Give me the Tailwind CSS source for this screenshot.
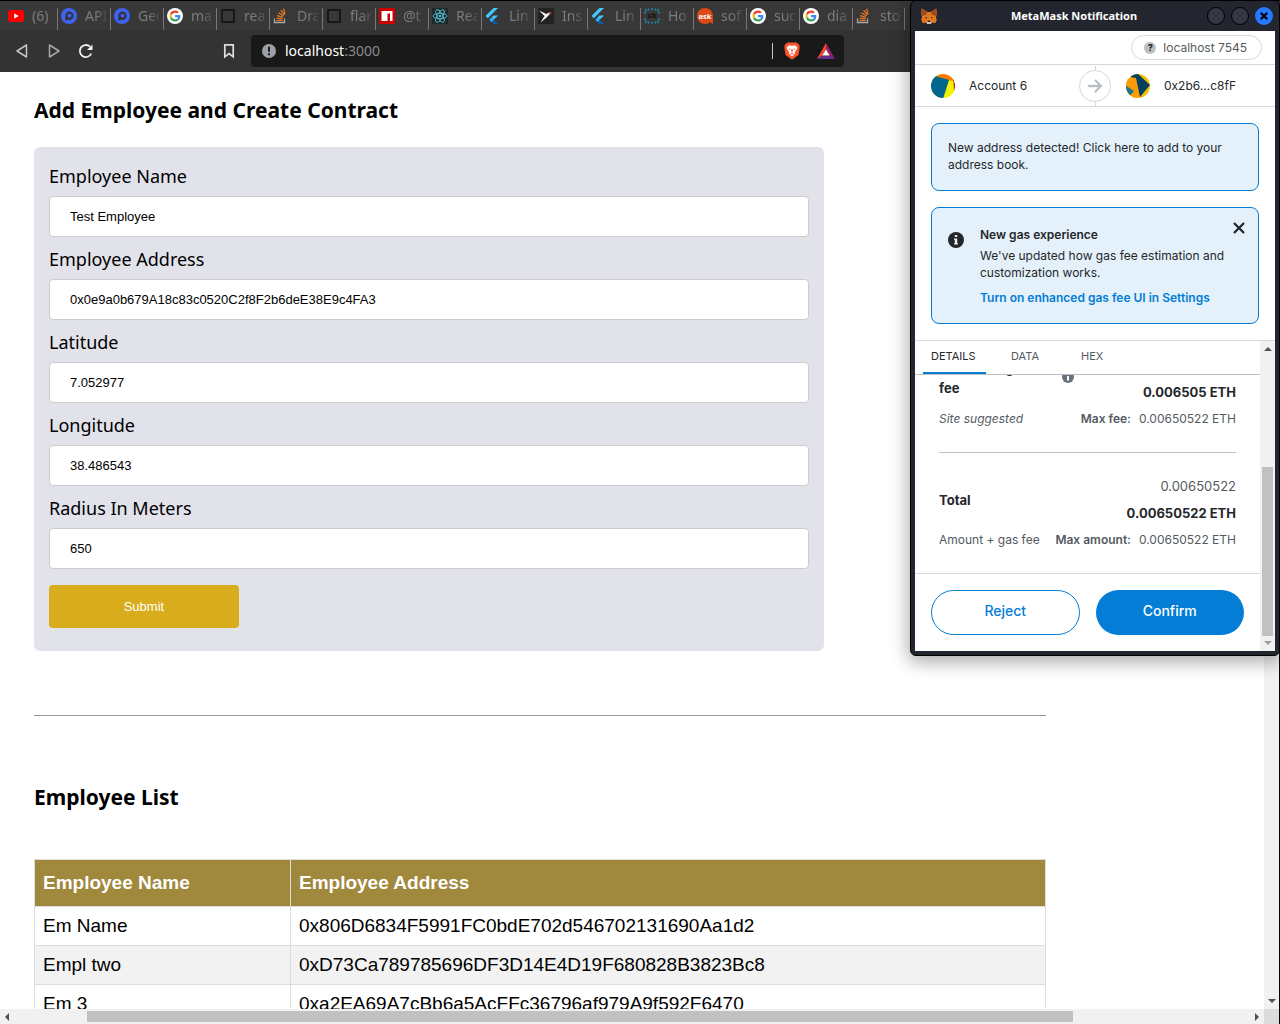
<!DOCTYPE html>
<html lang="en">
<head>
<meta charset="utf-8">
<meta name="viewport" content="width=device-width, initial-scale=1">
<title>Employee Contracts</title>
<script src="https://cdn.jsdelivr.net/npm/@tailwindcss/browser@4"></script>
</head>
<body class="relative flex h-screen flex-col overflow-hidden bg-white text-black">

<!-- Shared favicons -->
<svg class="hidden" aria-hidden="true">
  <symbol id="youtube" viewBox="0 0 16 16"><rect y="2" width="16" height="12" rx="2.500" fill="#f00"/><path d="M6.200 5.400v5.200L10.800 8z" fill="#fff"/></symbol>
  <symbol id="geo" viewBox="0 0 16 16"><circle cx="8" cy="8" r="8" fill="#3f62f2"/><path d="M4.200 12.800V8A4.200 4.200 0 1 1 8.400 12H6.500z" fill="#323540"/><circle cx="8.500" cy="7.600" r="1.900" fill="#3f62f2"/></symbol>
  <symbol id="google" viewBox="0 0 48 48"><circle cx="24" cy="24" r="24" fill="#fff"/><g transform="translate(7.500 7.500) scale(.69)"><path fill="#EA4335" d="M24 9.500c3.540 0 6.710 1.220 9.210 3.600l6.850-6.850C35.900 2.380 30.470 0 24 0 14.620 0 6.510 5.380 2.560 13.220l7.980 6.190C12.430 13.720 17.740 9.500 24 9.500z"/><path fill="#4285F4" d="M46.980 24.550c0-1.570-.15-3.090-.38-4.550H24v9.020h12.940c-.58 2.960-2.260 5.480-4.780 7.180l7.730 6c4.510-4.180 7.090-10.360 7.090-17.650z"/><path fill="#FBBC05" d="M10.530 28.590c-.48-1.450-.76-2.990-.76-4.590s.27-3.140.76-4.590l-7.980-6.190C.92 16.460 0 20.120 0 24c0 3.880.92 7.540 2.560 10.780l7.970-6.190z"/><path fill="#34A853" d="M24 48c6.480 0 11.930-2.130 15.890-5.810l-7.730-6c-2.150 1.450-4.920 2.300-8.160 2.300-6.260 0-11.570-4.220-13.470-9.910l-7.980 6.190C6.510 42.620 14.620 48 24 48z"/></g></symbol>
  <symbol id="square" viewBox="0 0 16 16"><rect x="2" y="2" width="12" height="12" fill="none" stroke="#090909" stroke-width="1.300"/></symbol>
  <symbol id="stack" viewBox="0 0 16 16"><path d="M1.500 10.500v4h10v-4" fill="none" stroke="#a5a8aa" stroke-width="1.300"/><path d="M3.500 12.500h6M3.600 10.300l6 .6M4.100 7.700l5.800 1.700M5.500 4.800l5.100 3.200M7.700 2.200l3.700 4.700M10.700.6l1.200 5.800" stroke="#f47920" stroke-width="1.200"/></symbol>
  <symbol id="npm" viewBox="0 0 16 16"><path fill="#c00" d="M0 0h16v16H0z"/><path fill="#fff" d="M2.500 3h11v10H11V5.500H8.500V13h-6z"/></symbol>
  <symbol id="react" viewBox="0 0 16 16"><rect width="16" height="16" rx="1" fill="#20282b"/><g fill="none" stroke="#54bdd4" stroke-width=".9"><ellipse cx="8" cy="8" rx="7" ry="2.700"/><ellipse cx="8" cy="8" rx="7" ry="2.700" transform="rotate(60 8 8)"/><ellipse cx="8" cy="8" rx="7" ry="2.700" transform="rotate(120 8 8)"/></g><circle cx="8" cy="8" r="1.300" fill="#54bdd4"/></symbol>
  <symbol id="flutter" viewBox="0 0 16 16"><path fill="#45c8fb" d="M8.500 0H13L2.800 10.200.5 8z"/><path fill="#45c8fb" d="M8.500 7.400H13L8.800 11.600 6.500 9.400z"/><path fill="#0d5ba6" d="M4.300 11.700 6.600 9.400 13 16H8.500z"/><path fill="#2cb4f0" d="m4.300 11.700 2.300-2.300 2.300 2.300-2.300 2.300z"/></symbol>
  <symbol id="bird" viewBox="0 0 16 16"><rect width="16" height="16" rx="1" fill="#222"/><path fill="#f5f5f5" d="M1 2.500 8.500 6l2.300-1.500 1.700.7-2 2.300L8 10l-5.500 4.500L6.500 8z"/><path fill="#e04a32" d="M9.500 5c1.500-1.300 3.200-.8 4.800.2l-2.800.5z"/></symbol>
  <symbol id="cb" viewBox="0 0 16 16"><path d="M1 1l2 2M4.200.5l.8 2M8 0v2.200M11.800.5l-.8 2M15 1l-2 2M0 4.500h2M14 4.500h2M0 11.500h2M14 11.500h2M1 15l2-2M4.200 15.500l.8-2M8 16v-2.200M11.800 15.500l-.8-2M15 15l-2-2" stroke="#2188b5" stroke-width="1.300"/><text x="8" y="10.300" text-anchor="middle" font-family="Liberation Sans" font-weight="700" font-size="8" fill="#111">cb</text></symbol>
  <symbol id="ask" viewBox="0 0 16 16"><circle cx="8" cy="8" r="8" fill="#dd4814"/><path fill="#dd4814" d="M11 13l5-3v6z"/><text x="8" y="10.500" text-anchor="middle" font-family="Open Sans" font-weight="700" font-size="7.500" fill="#fff">ask</text></symbol>
  <symbol id="arrow" viewBox="0 0 8 4"><path d="M4 0 8 4H0z"/></symbol>
</svg>

<!-- Browser tabs -->
<nav class="flex h-[30px] shrink-0 overflow-hidden border-t border-black bg-[#383838] pl-1 font-['Noto_Sans',sans-serif] text-sm text-[#7c7c7c]" aria-label="Tabs">
  <a href="#" class="flex w-[53px] shrink-0 items-center gap-2 pl-1"><svg class="size-4 shrink-0"><use href="#youtube"/></svg><span class="w-[21px] overflow-hidden">(6)</span></a>
  <a href="#" class="flex w-[53px] shrink-0 items-center gap-2 pl-1 relative before:absolute before:left-0 before:top-[7px] before:h-[22px] before:w-px before:bg-[#777]"><svg class="size-4 shrink-0"><use href="#geo"/></svg><span class="w-[21px] overflow-hidden [mask-image:linear-gradient(90deg,#000_50%,#0004)]">API</span></a>
  <a href="#" class="flex w-[53px] shrink-0 items-center gap-2 pl-1 relative before:absolute before:left-0 before:top-[7px] before:h-[22px] before:w-px before:bg-[#777]"><svg class="size-4 shrink-0"><use href="#geo"/></svg><span class="w-[21px] overflow-hidden [mask-image:linear-gradient(90deg,#000_50%,#0004)]">Geo</span></a>
  <a href="#" class="flex w-[53px] shrink-0 items-center gap-2 pl-1 relative before:absolute before:left-0 before:top-[7px] before:h-[22px] before:w-px before:bg-[#777]"><svg class="size-4 shrink-0"><use href="#google"/></svg><span class="w-[21px] overflow-hidden [mask-image:linear-gradient(90deg,#000_50%,#0004)]">ma</span></a>
  <a href="#" class="flex w-[53px] shrink-0 items-center gap-2 pl-1 relative before:absolute before:left-0 before:top-[7px] before:h-[22px] before:w-px before:bg-[#777]"><svg class="size-4 shrink-0"><use href="#square"/></svg><span class="w-[21px] overflow-hidden [mask-image:linear-gradient(90deg,#000_50%,#0004)]">rea</span></a>
  <a href="#" class="flex w-[53px] shrink-0 items-center gap-2 pl-1 relative before:absolute before:left-0 before:top-[7px] before:h-[22px] before:w-px before:bg-[#777]"><svg class="size-4 shrink-0"><use href="#stack"/></svg><span class="w-[21px] overflow-hidden [mask-image:linear-gradient(90deg,#000_50%,#0004)]">Dra</span></a>
  <a href="#" class="flex w-[53px] shrink-0 items-center gap-2 pl-1 relative before:absolute before:left-0 before:top-[7px] before:h-[22px] before:w-px before:bg-[#777]"><svg class="size-4 shrink-0"><use href="#square"/></svg><span class="w-[21px] overflow-hidden [mask-image:linear-gradient(90deg,#000_50%,#0004)]">flar</span></a>
  <a href="#" class="flex w-[53px] shrink-0 items-center gap-2 pl-1 relative before:absolute before:left-0 before:top-[7px] before:h-[22px] before:w-px before:bg-[#777]"><svg class="size-4 shrink-0"><use href="#npm"/></svg><span class="w-[21px] overflow-hidden [mask-image:linear-gradient(90deg,#000_50%,#0004)]">@t</span></a>
  <a href="#" class="flex w-[53px] shrink-0 items-center gap-2 pl-1 relative before:absolute before:left-0 before:top-[7px] before:h-[22px] before:w-px before:bg-[#777]"><svg class="size-4 shrink-0"><use href="#react"/></svg><span class="w-[21px] overflow-hidden [mask-image:linear-gradient(90deg,#000_50%,#0004)]">Rea</span></a>
  <a href="#" class="flex w-[53px] shrink-0 items-center gap-2 pl-1 relative before:absolute before:left-0 before:top-[7px] before:h-[22px] before:w-px before:bg-[#777]"><svg class="size-4 shrink-0"><use href="#flutter"/></svg><span class="w-[21px] overflow-hidden [mask-image:linear-gradient(90deg,#000_50%,#0004)]">Lin</span></a>
  <a href="#" class="flex w-[53px] shrink-0 items-center gap-2 pl-1 relative before:absolute before:left-0 before:top-[7px] before:h-[22px] before:w-px before:bg-[#777]"><svg class="size-4 shrink-0"><use href="#bird"/></svg><span class="w-[21px] overflow-hidden [mask-image:linear-gradient(90deg,#000_50%,#0004)]">Ins</span></a>
  <a href="#" class="flex w-[53px] shrink-0 items-center gap-2 pl-1 relative before:absolute before:left-0 before:top-[7px] before:h-[22px] before:w-px before:bg-[#777]"><svg class="size-4 shrink-0"><use href="#flutter"/></svg><span class="w-[21px] overflow-hidden [mask-image:linear-gradient(90deg,#000_50%,#0004)]">Lin</span></a>
  <a href="#" class="flex w-[53px] shrink-0 items-center gap-2 pl-1 relative before:absolute before:left-0 before:top-[7px] before:h-[22px] before:w-px before:bg-[#777]"><svg class="size-4 shrink-0"><use href="#cb"/></svg><span class="w-[21px] overflow-hidden [mask-image:linear-gradient(90deg,#000_50%,#0004)]">Ho</span></a>
  <a href="#" class="flex w-[53px] shrink-0 items-center gap-2 pl-1 relative before:absolute before:left-0 before:top-[7px] before:h-[22px] before:w-px before:bg-[#777]"><svg class="size-4 shrink-0"><use href="#ask"/></svg><span class="w-[21px] overflow-hidden [mask-image:linear-gradient(90deg,#000_50%,#0004)]">sof</span></a>
  <a href="#" class="flex w-[53px] shrink-0 items-center gap-2 pl-1 relative before:absolute before:left-0 before:top-[7px] before:h-[22px] before:w-px before:bg-[#777]"><svg class="size-4 shrink-0"><use href="#google"/></svg><span class="w-[21px] overflow-hidden [mask-image:linear-gradient(90deg,#000_50%,#0004)]">sud</span></a>
  <a href="#" class="flex w-[53px] shrink-0 items-center gap-2 pl-1 relative before:absolute before:left-0 before:top-[7px] before:h-[22px] before:w-px before:bg-[#777]"><svg class="size-4 shrink-0"><use href="#google"/></svg><span class="w-[21px] overflow-hidden [mask-image:linear-gradient(90deg,#000_50%,#0004)]">dia</span></a>
  <a href="#" class="flex w-[53px] shrink-0 items-center gap-2 pl-1 relative before:absolute before:left-0 before:top-[7px] before:h-[22px] before:w-px before:bg-[#777] after:absolute after:right-0 after:top-[7px] after:h-[22px] after:w-px after:bg-[#777]"><svg class="size-4 shrink-0"><use href="#stack"/></svg><span class="w-[21px] overflow-hidden [mask-image:linear-gradient(90deg,#000_50%,#0004)]">sto</span></a>
</nav>

<!-- Toolbar -->
<header class="flex h-[42px] shrink-0 items-center bg-[#333] pl-[14px] font-['Noto_Sans',sans-serif] text-sm">
  <div class="flex items-center gap-4">
    <button aria-label="Back"><svg class="size-4" viewBox="0 0 16 16" fill="none" stroke="#c4c4c4" stroke-width="1.500" stroke-linejoin="round"><path d="M12.500 2v12L3 8z"/></svg></button>
    <button aria-label="Forward"><svg class="size-4" viewBox="0 0 16 16" fill="none" stroke="#a8a8a8" stroke-width="1.500" stroke-linejoin="round"><path d="M3.500 2v12L13 8z"/></svg></button>
    <button aria-label="Reload"><svg class="size-4" viewBox="0 0 16 16" fill="none" stroke="#f2f2f2" stroke-width="1.800"><path d="M13.300 10.500A6 6 0 1 1 12 3.700"/><path d="M14.500 1.500v5.500H9z" fill="#f2f2f2" stroke="none"/></svg></button>
  </div>
  <button class="ml-[127px]" aria-label="Bookmark"><svg class="size-4" viewBox="0 0 16 16" fill="none" stroke="#dedede" stroke-width="1.700"><path d="M3.800 1.800h8.400v12L8 10.500l-4.200 3.300z"/></svg></button>
  <form class="ml-[14px] flex h-8 w-[593px] items-center rounded bg-[#191919] pl-[11px] pr-[9px]">
    <svg class="size-[14px] shrink-0" viewBox="0 0 14 14"><circle cx="7" cy="7" r="7" fill="#9aa0a6"/><path d="M6 2.800h2v5H6zM6 9.200h2v2H6z" fill="#191919"/></svg>
    <div class="ml-[9px] flex-1 text-[#8a8a8a]" role="textbox" aria-label="Address"><span class="text-white">localhost</span>:3000</div>
    <span class="h-4 w-px bg-[#c8c8c8]"></span>
    <button type="button" class="ml-[11px]" aria-label="Shields"><svg class="h-[18px] w-4" viewBox="0 0 16 18"><path d="M3.500.5h9L15.500 3v3.500l-1 6.500L8 17.800 1.500 13l-1-6.500V3z" fill="#fb542b"/><path d="M5 3.200 8 3.800l3-.6 2.200 2.300-.6 2.300-1.800 2.200.3 1.500L8 14.500l-3.100-3 .3-1.500-1.800-2.200-.6-2.300z" fill="#fff"/><path d="m4.500 6.200 2 .8-.5 1.200zM11.500 6.200l-2 .8.500 1.200zM7.500 7h1l.4 2.500L8 10l-.9-.5zM6.200 11.500 8 10.700l1.800.8L8 12.800z" fill="#fb542b"/></svg></button>
    <button type="button" class="ml-[17px]" aria-label="Rewards"><svg class="h-4 w-[18px]" viewBox="0 0 18 16"><path d="M9 0 0 16l5.500-3.500L9 6z" fill="#ff4724"/><path d="M9 0v6l3.500 6.500L18 16z" fill="#9e1f63"/><path d="M0 16h18l-5.500-3.500h-7z" fill="#662d91"/><path d="m9 6.200 3.600 6.300H5.400z" fill="#fff"/></svg></button>
  </form>
</header>

<!-- Page viewport -->
<div class="flex min-h-0 flex-1 border-r border-black">
  <main class="min-w-0 flex-1 overflow-hidden pl-[34px] pt-6 font-['Noto_Sans',sans-serif]">
    <div class="w-[82.3%]">
      <h2 class="text-[21px]/7 font-bold">Add Employee and Create Contract</h2>
      <form class="mt-[23px] w-[78%] rounded-md bg-[#e2e2eb] p-[15px] text-lg/6">
        <label for="name" class="block pt-[2px]">Employee Name</label>
        <input id="name" value="Test Employee" class="my-2 block h-[41px] w-full rounded border border-[#ccc] bg-white px-5 font-['Liberation_Sans',sans-serif] text-[13px]">
        <label for="address" class="block pt-[2px]">Employee Address</label>
        <input id="address" value="0x0e9a0b679A18c83c0520C2f8F2b6deE38E9c4FA3" class="my-2 block h-[41px] w-full rounded border border-[#ccc] bg-white px-5 font-['Liberation_Sans',sans-serif] text-[13px]">
        <label for="lat" class="block pt-[2px]">Latitude</label>
        <input id="lat" value="7.052977" class="my-2 block h-[41px] w-full rounded border border-[#ccc] bg-white px-5 font-['Liberation_Sans',sans-serif] text-[13px]">
        <label for="lng" class="block pt-[2px]">Longitude</label>
        <input id="lng" value="38.486543" class="my-2 block h-[41px] w-full rounded border border-[#ccc] bg-white px-5 font-['Liberation_Sans',sans-serif] text-[13px]">
        <label for="radius" class="block pt-[2px]">Radius In Meters</label>
        <input id="radius" value="650" class="my-2 block h-[41px] w-full rounded border border-[#ccc] bg-white px-5 font-['Liberation_Sans',sans-serif] text-[13px]">
        <button type="button" class="my-2 mt-4 block h-[43px] w-1/4 rounded bg-[#d8ac1a] font-['Liberation_Sans',sans-serif] text-[13px] text-white">Submit</button>
      </form>
      <hr class="mt-16 border-t border-[#999]">
      <h2 class="mt-[67px] text-[21px]/7 font-bold">Employee List</h2>
      <table class="mt-12 w-full table-fixed border-collapse text-left font-['Liberation_Sans',sans-serif] text-[19px]/[22px]">
        <thead>
          <tr class="bg-[#a0883c] text-white">
            <th class="w-[256px] border border-[#ddd] px-2 py-3 font-bold">Employee Name</th>
            <th class="border border-[#ddd] px-2 py-3 font-bold">Employee Address</th>
          </tr>
        </thead>
        <tbody>
          <tr><td class="border border-[#ddd] p-2">Em Name</td><td class="border border-[#ddd] p-2">0x806D6834F5991FC0bdE702d546702131690Aa1d2</td></tr>
          <tr class="bg-[#f2f2f2]"><td class="border border-[#ddd] p-2">Empl two</td><td class="border border-[#ddd] p-2">0xD73Ca789785696DF3D14E4D19F680828B3823Bc8</td></tr>
          <tr><td class="border border-[#ddd] p-2">Em 3</td><td class="border border-[#ddd] p-2">0xa2EA69A7cBb6a5AcFFc36796af979A9f592F6470</td></tr>
        </tbody>
      </table>
    </div>
  </main>
  <div class="flex w-[15px] flex-col items-center justify-end bg-[#f1f1f1] pb-[6px]"><svg class="h-1 w-2 rotate-180 fill-[#505050]"><use href="#arrow"/></svg></div>
</div>
<div class="flex h-[15px] shrink-0 items-center border-r border-black bg-[#f1f1f1]">
  <svg class="ml-[3px] h-1 w-2 -rotate-90 fill-[#505050]"><use href="#arrow"/></svg>
  <div class="flex-1 pl-[76px] pr-[180px]"><div class="h-[11px] bg-[#c1c1c1]"></div></div>
  <svg class="mr-[3px] h-1 w-2 rotate-90 fill-[#505050]"><use href="#arrow"/></svg>
  <div class="h-full w-[15px] bg-[#dcdcdc]"></div>
</div>

<!-- MetaMask window over the browser -->
<section class="absolute right-0 top-0 w-[370px] overflow-clip rounded-md border border-black bg-[#23252f] px-1 pb-1 font-[Inter,sans-serif] text-xs text-[#24272a] shadow-[0_4px_18px_2px_#0005]" aria-label="MetaMask Notification">
  <div class="flex h-[30px] items-center pl-[6px] pr-[2px]">
    <svg class="size-4" viewBox="0 0 16 16"><path d="M.8.500 6.500 4h3L15.200.5 16 5l-1 4 .8 3-1.600 3.200-3-.8L9.500 16h-3l-1.700-1.600-3 .8L.2 12 1 9 0 5z" fill="#e2761b"/><path d="M.8.500 6.500 4 5.200 6.500 1.300 8 0 5zM15.200.5 9.500 4l1.300 2.500 3.900 1.500L16 5z" fill="#9a4c1e"/><path d="M6 9 3.800 9.500l2 1.200zM10 9l2.200.5-2 1.200z" fill="#233447"/><path d="m5 14 1.500-1h3l1.500 1-1.500 2h-3z" fill="#d7c1b3"/><path d="M6.600 12.800h2.800v1.200H6.600z" fill="#161616"/></svg>
    <h1 class="flex-1 pl-1 text-center font-['Noto_Sans',sans-serif] text-[11px] font-bold text-white">MetaMask Notification</h1>
    <div class="flex gap-[6px]">
      <button class="size-[18px] rounded-full border border-black bg-[#343743]" aria-label="Minimize"></button>
      <button class="size-[18px] rounded-full border border-black bg-[#343743]" aria-label="Maximize"></button>
      <button class="grid size-[18px] place-items-center rounded-full bg-[#2777ff]" aria-label="Close"><svg class="size-2" viewBox="0 0 8 8" stroke="#000" stroke-width="2"><path d="m.8.800 6.400 6.400M7.200.8.800 7.200"/></svg></button>
    </div>
  </div>

  <div class="bg-white">
    <div class="flex h-[34px] items-center justify-end border-b border-[#d6d9dc] pr-[13px]">
      <div class="flex h-[25px] items-center gap-[7px] rounded-full border border-[#d6d9dc] pl-3 pr-[14px] text-[#535a61]"><span class="grid size-3 place-items-center rounded-full bg-[#bbc0c5] text-[9px]/3 font-extrabold text-[#24272a]">?</span>localhost 7545</div>
    </div>
    <div class="grid h-[42px] grid-cols-[1fr_32px_1fr] items-center border-b border-[#d6d9dc]">
      <div class="flex items-center gap-[14px] pl-4">
        <svg class="size-6" viewBox="0 0 24 24"><clipPath id="round"><circle cx="12" cy="12" r="12"/></clipPath><g clip-path="url(#round)"><path fill="#f2f202" d="M0 0h24v24H0z"/><path fill="#c8142f" d="m20 5 5 1v12l-3-1z"/><path fill="#fb7a00" d="M4 2.500 12-1l9 3 1.500 5-4.500 0z"/><path fill="#f2f202" d="M17 6 22.500 7 23 18l-4 8-9-1z"/><path fill="#03668c" d="M-1 0 6 2.500l12 3.500L12 25-1 24z"/></g></svg>
        Account 6
      </div>
      <div class="relative grid h-10 place-items-center before:absolute before:inset-y-0 before:left-1/2 before:w-px before:bg-[#d6d9dc]"><span class="relative grid size-8 place-items-center rounded-full border border-[#d6d9dc] bg-white"><svg class="size-4" viewBox="0 0 16 16" fill="none" stroke="#bbc0c5" stroke-width="2.300" stroke-linecap="round" stroke-linejoin="round"><path d="M2 8h12M8.500 2.500 14 8l-5.500 5.500"/></svg></span></div>
      <div class="flex items-center gap-[14px] pl-[15px]">
        <svg class="size-6" viewBox="0 0 24 24"><g clip-path="url(#round)"><path fill="#f5c000" d="M0 0h24v24H0z"/><path fill="#fa9a05" d="M0 6 9 2l7 20-10 4-7-5z"/><path fill="#18778c" d="M-1 11 8 17l-5 6-4-2z"/><path fill="#05405c" d="M4 3 10-2l14 13-10 12-4-19z"/></g></svg>
        0x2b6...c8fF
      </div>
    </div>

    <div class="space-y-4 p-4">
      <p class="rounded-lg border border-[#037dd6] bg-[#e4f1fb] px-4 pb-[17px] pt-[15px] leading-[17px]">New address detected! Click here to add to your address book.</p>
      <div class="relative flex gap-4 rounded-lg border border-[#037dd6] bg-[#e4f1fb] px-4 pb-[17px] pt-[17px] leading-[17px]">
        <svg class="mt-[7px] size-4 shrink-0" viewBox="0 0 16 16"><circle cx="8" cy="8" r="8" fill="#24272a"/><path d="M6.800 3h2.400v2H6.800zM6 6.500h3.200v4.700H10v1.300H6v-1.300h.8V7.800H6z" fill="#e4f1fb"/></svg>
        <div>
          <h2 class="leading-5 font-semibold">New gas experience</h2>
          <p class="mt-[2px]">We've updated how gas fee estimation and customization works.</p>
          <a href="#" class="mt-2 block font-semibold text-[#037dd6]">Turn on enhanced gas fee UI in Settings</a>
        </div>
        <button class="absolute right-[13px] top-[14px]" aria-label="Dismiss"><svg class="size-3" viewBox="0 0 12 12" stroke="#24272a" stroke-width="2.300"><path d="m1 1 10 10M11 1 1 11"/></svg></button>
      </div>
    </div>

    <div class="flex h-[311px] border-t border-[#d6d9dc]">
      <div class="flex min-w-0 flex-1 flex-col">
        <div class="flex h-[34px] shrink-0 gap-[17px] border-b border-[#bbc0c5] pl-2 text-[11px] text-[#535a61]" role="tablist">
          <button role="tab" aria-selected="true" class="w-[63px] border-b-2 border-[#037dd6] px-2 text-left text-[#24272a]">DETAILS</button>
          <button role="tab" class="w-[53px] border-b-2 border-transparent px-2 text-left">DATA</button>
          <button role="tab" class="border-b-2 border-transparent px-2 text-left">HEX</button>
        </div>
        <div class="flex min-h-0 flex-1 flex-col justify-end overflow-hidden px-6 pb-[23px] leading-5 text-[#535a61]">
          <div class="flex h-11 shrink-0 text-[13px] leading-5 font-bold text-[#24272a]">
            <div class="mr-[23px] w-[100px]">Estimated gas fee</div>
            <svg class="mt-[13px] size-3" viewBox="0 0 12 12"><circle cx="6" cy="6" r="6" fill="#6a737d"/><path d="M5 2.500h2V4H5zM5 5h2v4.500H5z" fill="#fff"/></svg>
            <div class="flex-1 self-end text-right">0.006505 ETH</div>
          </div>
          <div class="mt-[7px] flex justify-between"><em>Site suggested</em><span><b class="mr-2 font-semibold">Max fee:</b>0.00650522 ETH</span></div>
          <hr class="mt-[23px] border-[#bbc0c5]">
          <div class="mt-[23px] flex items-center justify-between text-[13px] leading-5 font-bold text-[#24272a]">
            <span>Total</span>
            <div class="space-y-[7px] text-right"><p class="font-normal text-[#535a61]">0.00650522</p><p>0.00650522 ETH</p></div>
          </div>
          <div class="mt-[7px] flex justify-between"><span>Amount + gas fee</span><span><b class="mr-2 font-semibold">Max amount:</b>0.00650522 ETH</span></div>
        </div>
        <div class="grid shrink-0 grid-cols-2 gap-4 border-t border-[#d6d9dc] p-4 text-sm font-medium">
          <button class="h-[45px] rounded-full border border-[#037dd6] pb-[3px] text-[#037dd6]">Reject</button>
          <button class="h-[45px] rounded-full bg-[#037dd6] pb-[3px] text-white">Confirm</button>
        </div>
      </div>
      <div class="flex w-[15px] flex-col items-center bg-[#f1f1f1] py-[6px]">
        <svg class="h-1 w-2 shrink-0 fill-[#505050]"><use href="#arrow"/></svg>
        <div class="mt-[116px] w-[11px] flex-1 bg-[#c1c1c1]"></div>
        <svg class="mt-[5px] h-1 w-2 shrink-0 rotate-180 fill-[#a0a0a0]"><use href="#arrow"/></svg>
      </div>
    </div>
  </div>
</section>
</body>
</html>
